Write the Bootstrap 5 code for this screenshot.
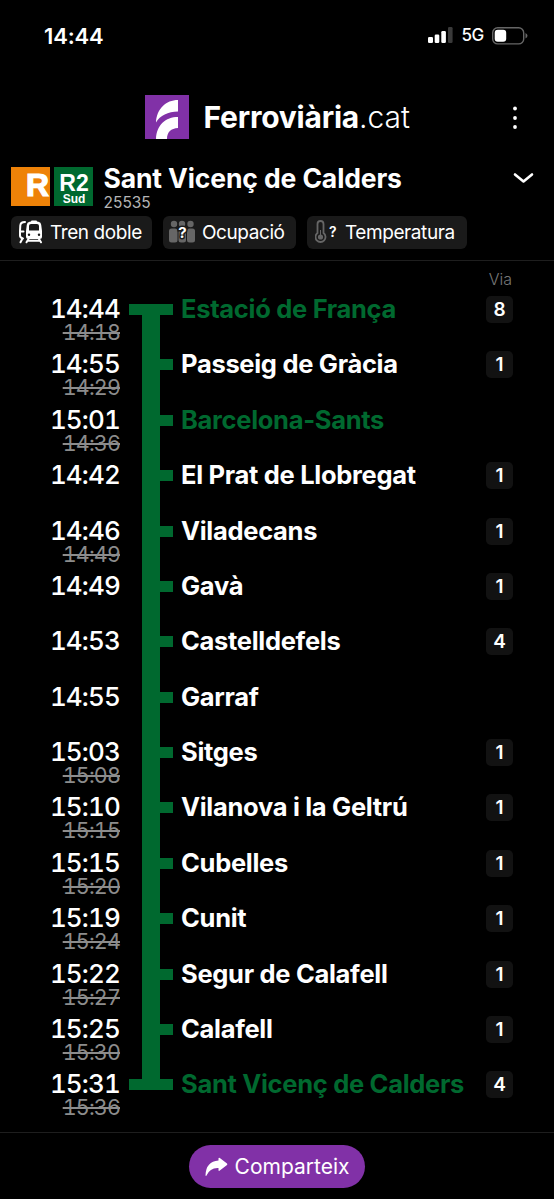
<!DOCTYPE html>
<html lang="ca" data-bs-theme="dark">
<head>
<meta charset="utf-8">
<meta name="viewport" content="width=device-width, initial-scale=1">
<title>Ferroviària.cat</title>
<link href="https://cdn.jsdelivr.net/npm/bootstrap@5.3.0/dist/css/bootstrap.min.css" rel="stylesheet">
<style>
html,body{height:1199px;overflow:hidden}
body{background:#000;color:#fff;font-family:Inter,"Liberation Sans",sans-serif;line-height:1;white-space:nowrap}
svg{display:block;flex:none}
.topbar{height:261px;border-bottom:1px solid #1e1e1e}
.status{height:71px;padding:0 26px 0 44px}
.clock{font-size:22px;font-weight:600;letter-spacing:-.15px}
.net{font-size:17px;font-weight:500;letter-spacing:-.3px}
.brandbar{height:90px;margin-top:1px;padding-right:30px;padding-left:145px}
.brandname{font-size:30px;font-weight:700;letter-spacing:-.22px;margin-left:14.5px}
.brandname span{font-weight:300;letter-spacing:0}
.trip{height:54px;padding-left:11px;padding-right:20px}
.logo{width:39px;height:39px;margin-top:5px}
.triptext{margin-left:10.5px;padding-top:3px}
.dest{font-size:26.5px;font-weight:650;letter-spacing:-.12px}
.num{font-size:15.5px;color:#b4b4b4;margin-top:3px}
.chips{padding-left:11px;height:45px;gap:11px}
.chip{height:33px;background:#1a1a1a;border-radius:6px;font-size:19px;letter-spacing:-.42px;padding-bottom:1px}
.chip span{margin-left:7px}
.chip-train{width:141px;padding-left:7px}
.chip-people{width:133px;padding-left:6px}
.chip-temp{width:160px;padding-left:8px}
.stops{height:871px}
.via{font-size:16px;color:#777;font-weight:300;height:21px;padding:10px 42px 0 0}
.stop{height:55.38px;padding-left:40px}
.times{width:80px;text-align:right;padding-top:13px;font-feature-settings:"tnum"}
.now{font-size:26px;font-weight:550;line-height:27px;letter-spacing:-.85px}
.old{font-size:21.5px;line-height:21px;color:#8c8c8c;text-decoration:line-through;text-decoration-thickness:2px;letter-spacing:-.85px}
.rail{width:44px;height:56px;margin:0 8px 0 9px;background:linear-gradient(#00692f,#00692f) 13px 0/18px 100% no-repeat,linear-gradient(#00692f,#00692f) 31px 22px/13px 11px no-repeat}
.rail.first{background:linear-gradient(#00692f,#00692f) 13px 22px/18px 40px no-repeat,linear-gradient(#00692f,#00692f) 0 22px/44px 11px no-repeat}
.rail.last{background:linear-gradient(#00692f,#00692f) 13px 0/18px 33px no-repeat,linear-gradient(#00692f,#00692f) 0 22px/44px 11px no-repeat}
.station{font-size:25.5px;font-weight:650;line-height:53.5px;letter-spacing:-.3px}
.hub{color:#00692f}
.track{width:27px;height:27px;margin:14px 41px 0 0;background:#121212;border-radius:5px;font-size:19px;font-weight:600}
.foot{height:67px;border-top:1px solid #1e1e1e;padding-top:12px}
.share{width:176px;height:43px;background:#8131a7;border:0;border-radius:22px;font-size:21px;color:#fff;letter-spacing:0;gap:7px}
</style>
</head>
<body>
<header class="topbar">
<div class="status d-flex align-items-center justify-content-between">
<span class="clock">14:44</span>
<div class="d-flex align-items-center">
<svg width="25" height="17" viewBox="0 0 25 17"><g fill="#fff"><rect y="10" width="5" height="6" rx="1.3"/><rect x="6.700" y="7.500" width="4.600" height="8.500" rx="1.3"/><rect x="13.300" y="4" width="4.600" height="12" rx="1.3"/></g><rect x="20" y="0" width="4.600" height="16" rx="1.3" fill="#3a3a3a"/></svg>
<span class="net ms-2">5G</span>
<svg class="ms-2" width="36" height="18" viewBox="0 0 36 18"><rect x=".7" y=".7" width="31" height="16.200" rx="5" fill="none" stroke="#666" stroke-width="1.400"/><rect x="2.700" y="2.800" width="11.500" height="12" rx="3" fill="#fff"/><path d="M33.500 6v5.500q2-1 2-2.750T33.500 6z" fill="#666"/></svg>
</div>
</div>
<div class="brandbar d-flex align-items-center">
<svg width="44" height="44" viewBox="0 0 44 44"><path fill="#8131a7" d="M0 0h44v44H0z"/><path fill="#fff" d="M33 5v11.500C23 16.500 15 20.500 11 27.500C11.500 14 21 5 33 5zM33 22v11C26 33.500 22 37 22 44H11C11.500 30 20.500 22 33 22z"/></svg>
<div class="brandname">Ferroviària<span>.cat</span></div>
<svg class="ms-auto" width="18" height="24" viewBox="0 0 18 24"><g fill="#fff"><circle cx="9" cy="3.500" r="1.900"/><circle cx="9" cy="13" r="1.900"/><circle cx="9" cy="22" r="1.900"/></g></svg>
</div>
<div class="trip d-flex">
<svg class="logo" viewBox="0 0 39 39"><path fill="#ee8208" d="M0 0h39v39H0z"/><text x="15" y="29" font-family="Liberation Sans" font-weight="700" font-size="31" textLength="23" lengthAdjust="spacingAndGlyphs" fill="#fff" stroke="#fff" stroke-width="1.200">R</text></svg>
<svg class="logo ms-1" viewBox="0 0 39 39"><path fill="#00692f" d="M0 0h39v39H0z"/><g font-family="Liberation Sans" font-weight="700" fill="#fff" text-anchor="middle"><text x="20" y="24" font-size="23">R2</text><text x="20" y="36" font-size="12">Sud</text></g></svg>
<div class="triptext">
<div class="dest">Sant Vicenç de Calders</div>
<div class="num">25535</div>
</div>
<svg class="ms-auto" style="margin-top:9px" width="22" height="14" viewBox="0 0 22 14"><path d="M3 3.500l8.500 7L20 3.500" fill="none" stroke="#fff" stroke-width="2.600" stroke-linecap="round" stroke-linejoin="round"/></svg>
</div>
<div class="chips d-flex">
<div class="chip chip-train d-flex align-items-center"><svg width="25" height="24" viewBox="0 0 25 24"><g fill="none" stroke="#fff" stroke-width="2" stroke-linecap="round"><path d="M7 2Q2.500 2 2.300 5.500L2 11V15.500q0 2.300 3 3M2 11.500h3.500M4.500 18.500L2.500 22.300M10.500 19l-2 3.300M21 19l2 3.300M10.500 20.800h11"/></g><path fill="#fff" fill-rule="evenodd" d="M13 1.500Q13 .5 14 .5h4q1 0 1 1l1.500.300q2.500.5 2.700 3L24 11v5.500q0 2.500-2.500 2.500h-11Q8 19 8 16.500V11L8.800 4.800q.2-2.500 2.700-3zM11 6v4.500h10V6q0-2-2-2h-6q-2 0-2 2z"/><circle cx="11" cy="14.700" r="1.200" fill="#1a1a1a"/><circle cx="21" cy="14.700" r="1.200" fill="#1a1a1a"/></svg><span>Tren doble</span></div>
<div class="chip chip-people d-flex align-items-center"><svg width="26" height="24" viewBox="0 0 26 24"><g fill="#666"><circle cx="5" cy="4" r="3.200"/><circle cx="13" cy="4" r="3.200"/><circle cx="21.500" cy="4" r="3.200"/><rect y="8.500" width="8.500" height="14" rx="2.500"/><rect x="9.500" y="8.500" width="7.500" height="14" rx="2.500"/><rect x="18" y="8.500" width="8" height="14" rx="2.500"/></g><text x="13.200" y="17.500" text-anchor="middle" font-size="15" font-weight="700" fill="#fff" stroke="#1a1a1a" stroke-width="3" paint-order="stroke">?</text></svg><span>Ocupació</span></div>
<div class="chip chip-temp d-flex align-items-center"><svg width="23" height="24" viewBox="0 0 23 24"><path d="M2.500 13V4a3 3 0 0 1 6 0v9a5 5 0 1 1-6 0z" fill="none" stroke="#666" stroke-width="1.800"/><path d="M5.500 10v6" stroke="#666" stroke-width="1"/><circle cx="5.500" cy="17" r="2.600" fill="#666"/><text x="17.500" y="17" text-anchor="middle" font-size="14" font-weight="600" fill="#fff">?</text></svg><span>Temperatura</span></div>
</div>
</header>
<main class="stops">
<div class="via text-end">Via</div>
<div class="stop d-flex"><div class="times"><div class="now">14:44</div><div class="old">14:18</div></div><div class="rail first"></div><div class="station hub flex-grow-1">Estació de França</div><div class="track d-flex align-items-center justify-content-center">8</div></div>
<div class="stop d-flex"><div class="times"><div class="now">14:55</div><div class="old">14:29</div></div><div class="rail"></div><div class="station flex-grow-1">Passeig de Gràcia</div><div class="track d-flex align-items-center justify-content-center">1</div></div>
<div class="stop d-flex"><div class="times"><div class="now">15:01</div><div class="old">14:36</div></div><div class="rail"></div><div class="station hub flex-grow-1">Barcelona-Sants</div></div>
<div class="stop d-flex"><div class="times"><div class="now">14:42</div></div><div class="rail"></div><div class="station flex-grow-1">El Prat de Llobregat</div><div class="track d-flex align-items-center justify-content-center">1</div></div>
<div class="stop d-flex"><div class="times"><div class="now">14:46</div><div class="old">14:49</div></div><div class="rail"></div><div class="station flex-grow-1">Viladecans</div><div class="track d-flex align-items-center justify-content-center">1</div></div>
<div class="stop d-flex"><div class="times"><div class="now">14:49</div></div><div class="rail"></div><div class="station flex-grow-1">Gavà</div><div class="track d-flex align-items-center justify-content-center">1</div></div>
<div class="stop d-flex"><div class="times"><div class="now">14:53</div></div><div class="rail"></div><div class="station flex-grow-1">Castelldefels</div><div class="track d-flex align-items-center justify-content-center">4</div></div>
<div class="stop d-flex"><div class="times"><div class="now">14:55</div></div><div class="rail"></div><div class="station flex-grow-1">Garraf</div></div>
<div class="stop d-flex"><div class="times"><div class="now">15:03</div><div class="old">15:08</div></div><div class="rail"></div><div class="station flex-grow-1">Sitges</div><div class="track d-flex align-items-center justify-content-center">1</div></div>
<div class="stop d-flex"><div class="times"><div class="now">15:10</div><div class="old">15:15</div></div><div class="rail"></div><div class="station flex-grow-1">Vilanova i la Geltrú</div><div class="track d-flex align-items-center justify-content-center">1</div></div>
<div class="stop d-flex"><div class="times"><div class="now">15:15</div><div class="old">15:20</div></div><div class="rail"></div><div class="station flex-grow-1">Cubelles</div><div class="track d-flex align-items-center justify-content-center">1</div></div>
<div class="stop d-flex"><div class="times"><div class="now">15:19</div><div class="old">15:24</div></div><div class="rail"></div><div class="station flex-grow-1">Cunit</div><div class="track d-flex align-items-center justify-content-center">1</div></div>
<div class="stop d-flex"><div class="times"><div class="now">15:22</div><div class="old">15:27</div></div><div class="rail"></div><div class="station flex-grow-1">Segur de Calafell</div><div class="track d-flex align-items-center justify-content-center">1</div></div>
<div class="stop d-flex"><div class="times"><div class="now">15:25</div><div class="old">15:30</div></div><div class="rail"></div><div class="station flex-grow-1">Calafell</div><div class="track d-flex align-items-center justify-content-center">1</div></div>
<div class="stop d-flex"><div class="times"><div class="now">15:31</div><div class="old">15:36</div></div><div class="rail last"></div><div class="station hub flex-grow-1">Sant Vicenç de Calders</div><div class="track d-flex align-items-center justify-content-center">4</div></div>
</main>
<footer class="foot d-flex justify-content-center">
<button class="share d-flex align-items-center justify-content-center"><svg width="23" height="20" viewBox="0 0 23 20"><path fill="#fff" d="M13.500 1.300Q13.700.200 14.800.900L22 6.500Q22.700 7.200 22 8L14.800 13.600Q13.700 14.400 13.500 13.200V11Q5 10.500 1.500 18.500Q.7 19.800.5 18.300Q1 4.500 13.500 3.600z"/></svg>Comparteix</button>
</footer>
<script src="https://cdn.jsdelivr.net/npm/bootstrap@5.3.0/dist/js/bootstrap.bundle.min.js"></script>
</body>
</html>
